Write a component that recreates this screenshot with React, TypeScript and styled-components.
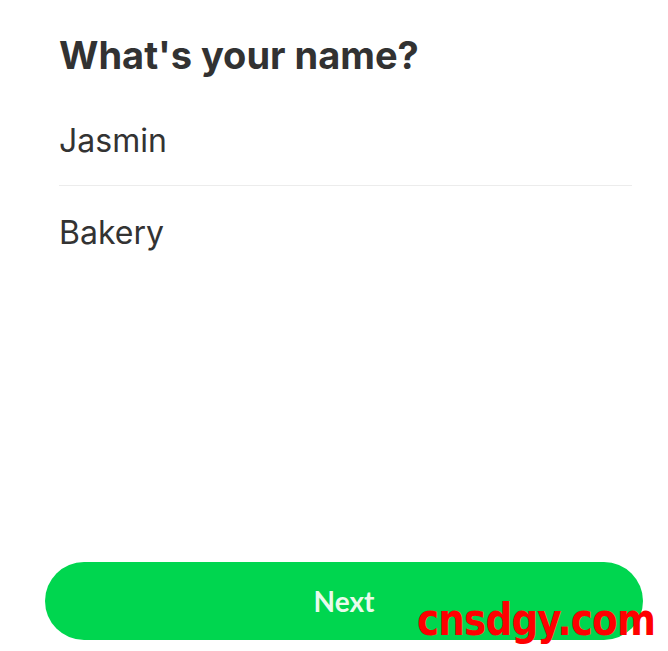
import React from "react";
import styled, { createGlobalStyle } from "styled-components";

const Global = createGlobalStyle`
  html, body { margin: 0; padding: 0; background: #ffffff; }
  body { font-family: Inter, "Noto Sans", sans-serif; }
`;

const Screen = styled.div`
  position: relative;
  width: 668px;
  height: 651px;
  display: flex;
  flex-direction: column;
  box-sizing: border-box;
  padding: 32px 36px 11px 45px;
  overflow: hidden;
`;

const Form = styled.div`
  display: flex;
  flex-direction: column;
  padding-left: 14px;
`;

const Title = styled.h1`
  margin: 0;
  font-family: Inter, sans-serif;
  font-weight: 700;
  font-size: 38px;
  line-height: 46px;
  color: #323232;
`;

const Field = styled.div<{ $divider?: boolean }>`
  font-family: Inter, sans-serif;
  font-size: 32px;
  line-height: 40px;
  color: #333333;
  padding: ${(p) => (p.$divider ? "43px 0 24px" : "27px 0")};
  border-bottom: ${(p) => (p.$divider ? "1px solid #ececec" : "none")};
`;

const Spacer = styled.div`
  flex: 1;
`;

const NextButton = styled.button`
  width: 598px;
  height: 78px;
  border: none;
  border-radius: 39px;
  background: #00d64f;
  color: #e9fbec;
  font-family: Lato, sans-serif;
  font-weight: 700;
  font-size: 28px;
  display: flex;
  align-items: center;
  justify-content: center;
  padding: 0;
`;

const Watermark = styled.div`
  position: absolute;
  left: 417px;
  top: 592px;
  font-family: "DejaVu Sans", sans-serif;
  font-weight: 700;
  font-size: 44px;
  line-height: 56px;
  color: #ff0000;
  letter-spacing: -1px;
  white-space: nowrap;
  transform: scaleX(0.85);
  transform-origin: left center;
`;

export default function App() {
  return (
    <>
      <Global />
      <Screen>
        <Form>
          <Title>What's your name?</Title>
          <Field $divider>Jasmin</Field>
          <Field>Bakery</Field>
        </Form>
        <Spacer />
        <NextButton>Next</NextButton>
        <Watermark>cnsdgy.com</Watermark>
      </Screen>
    </>
  );
}
